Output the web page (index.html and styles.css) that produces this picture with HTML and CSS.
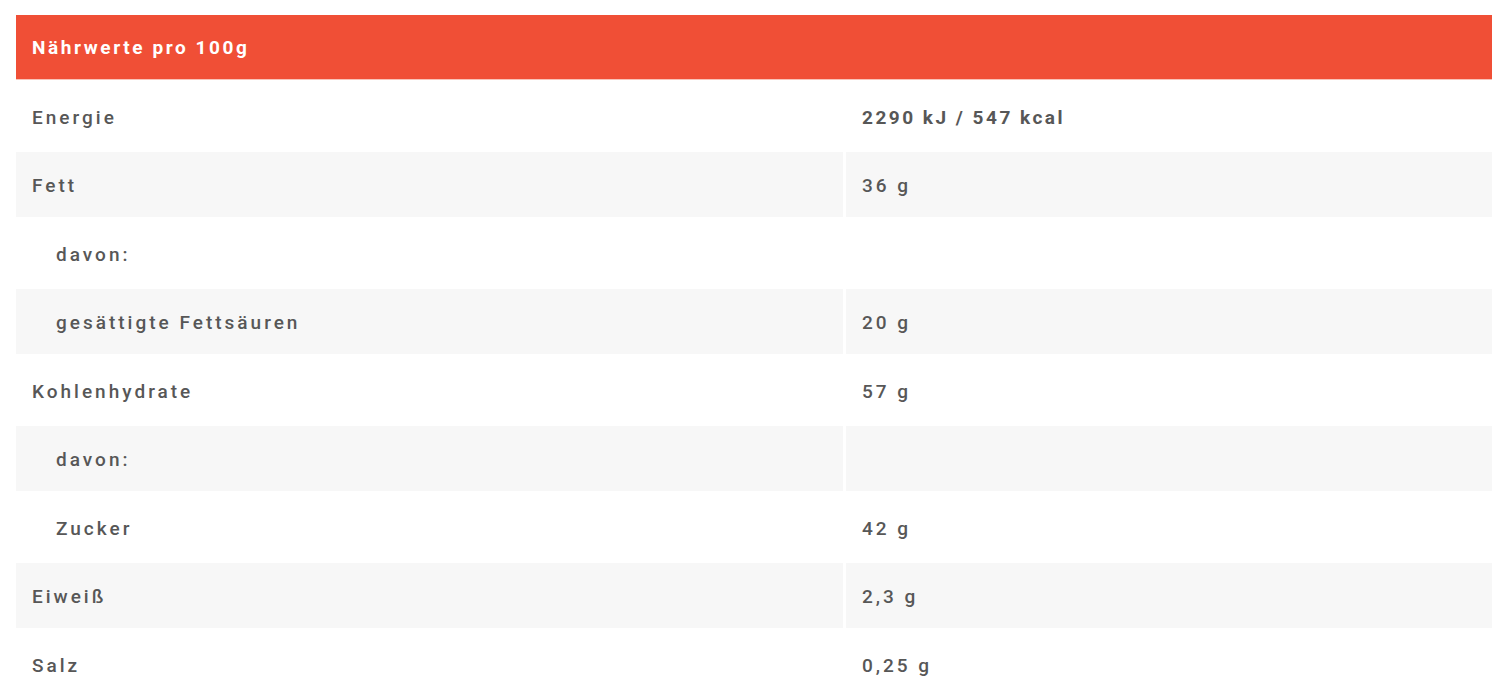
FILE: index.html
```html
<!DOCTYPE html>
<html lang="de">
<head>
<meta charset="utf-8">
<title>Nährwerte</title>
<link rel="stylesheet" href="styles.css">
</head>
<body>
<section class="nutrition">
  <div class="nutrition__head">Nährwerte pro 100g</div>
  <div class="nutrition__rows">
    <div class="row"><div class="cell">Energie</div><div class="cell cell--strong">2290 kJ / 547 kcal</div></div>
    <div class="row row--alt"><div class="cell">Fett</div><div class="cell">36 g</div></div>
    <div class="row"><div class="cell cell--sub">davon:</div><div class="cell"></div></div>
    <div class="row row--alt"><div class="cell cell--sub">gesättigte Fettsäuren</div><div class="cell">20 g</div></div>
    <div class="row"><div class="cell">Kohlenhydrate</div><div class="cell">57 g</div></div>
    <div class="row row--alt"><div class="cell cell--sub">davon:</div><div class="cell"></div></div>
    <div class="row"><div class="cell cell--sub">Zucker</div><div class="cell">42 g</div></div>
    <div class="row row--alt"><div class="cell">Eiweiß</div><div class="cell">2,3 g</div></div>
    <div class="row"><div class="cell">Salz</div><div class="cell">0,25 g</div></div>
  </div>
</section>
</body>
</html>
```
FILE: styles.css
```css
html, body {
  margin: 0;
  background: #fff;
}
body {
  padding: 15px 13px 0 16px;
  font-family: Roboto, "Liberation Sans", sans-serif;
  color: #575757;
}
.nutrition__head {
  height: 65px;
  box-sizing: border-box;
  background: #f04f36;
  border-bottom: 1px solid #f9c3b8;
  color: #fff;
  font-size: 19px;
  font-weight: 700;
  letter-spacing: 2.6px;
  display: flex;
  align-items: center;
  padding: 1px 16px 0;
}
.nutrition__rows {
  display: flex;
  flex-direction: column;
  gap: 3px;
  padding-top: 3px;
}
.row {
  display: grid;
  grid-template-columns: 827px 1fr;
  column-gap: 3px;
  height: 65.5px;
}
.row--alt .cell {
  background: #f7f7f7;
}
.cell {
  display: flex;
  align-items: center;
  padding: 3px 16px 0;
  font-size: 19px;
  font-weight: 500;
  letter-spacing: 3px;
  white-space: nowrap;
}
.cell--sub {
  padding-left: 40px;
}
.cell--strong {
  font-weight: 700;
  letter-spacing: 2.5px;
}
```
